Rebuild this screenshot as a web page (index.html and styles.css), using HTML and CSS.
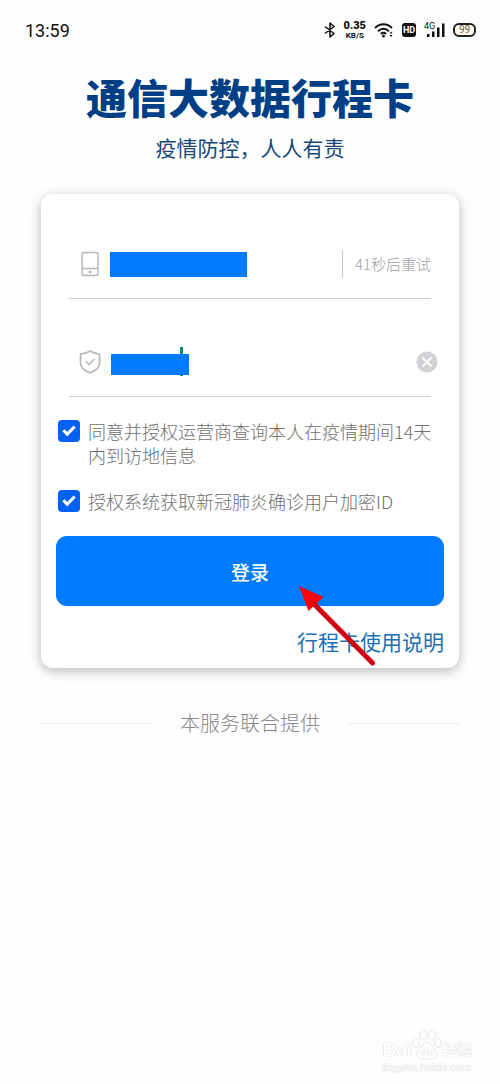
FILE: index.html
```html
<!DOCTYPE html>
<html lang="zh-CN">
<head>
<meta charset="utf-8">
<meta name="viewport" content="width=device-width, initial-scale=1">
<title>通信大数据行程卡</title>
<link rel="stylesheet" href="styles.css">
</head>
<body>
<div class="page">
  <div class="status">
    <time class="clock">13:59</time>
    <div class="indicators">
      <svg class="ico" width="12" height="16" viewBox="0 0 12 16" fill="none" stroke="#111" stroke-width="1.5" stroke-linejoin="round"><path d="M1 4.500 10 11.500 6 15V1l4 3.500L1 11.500"/></svg>
      <div class="speed"><b class="rate">0.35</b><span class="unit">KB/S</span></div>
      <svg class="ico" width="20" height="16" viewBox="0 0 20 16" fill="none" stroke="#111" stroke-width="1.900"><path d="M1 6C6 1 13 1 18 6M4 9.200C7.500 6 11.500 6 15 9.200M6.800 12C8.500 10.500 10.500 10.500 12.200 12"/><circle cx="9.500" cy="14" r="1.500" fill="#111" stroke="none"/><path d="m15.500 11.500 1.500-2 1.500 2zM15.500 13l1.500 2 1.500-2z" fill="#111" stroke="none"/></svg>
      <span class="hd">HD</span>
      <svg class="ico" width="21" height="16" viewBox="0 0 21 16" fill="#111"><text class="net" x="0" y="7">4G</text><path d="M3 12h2.500v3H3zM8 9.500h2.500V15H8zM13 5.500h2.500V15H13zM18 1.500h2.500V15H18z"/></svg>
      <span class="battery">99</span>
    </div>
  </div>

  <header class="heading">
    <h1 class="title">通信大数据行程卡</h1>
    <p class="subtitle">疫情防控，人人有责</p>
  </header>

  <main>
    <form class="card">
      <div class="fields">
        <div class="field">
          <svg class="lead" width="24" height="26" viewBox="0 0 24 26" fill="none" stroke="#b7b8bd" stroke-width="1.500"><rect x="4" y="1.500" width="16" height="23" rx="2"/><path d="M4 17.500h16"/><circle cx="12" cy="21" r=".8"/></svg>
          <div class="entry">
            <input class="box" type="tel" aria-label="手机号">
            <span class="mask mask-phone"></span>
          </div>
          <button class="retry" type="button">41秒后重试</button>
        </div>
        <div class="field">
          <svg class="lead" width="24" height="26" viewBox="0 0 24 26" fill="none" stroke="#b7b8bd" stroke-width="1.700" stroke-linejoin="round"><path d="M12 2C9 4 6 5 2.500 5v9c0 4.500 4.500 8 9.500 9.800C17 22 21.500 18.500 21.500 14V5C18 5 15 4 12 2z"/><path d="m8 12.500 3 3 5.500-5.500"/></svg>
          <div class="entry">
            <input class="box" type="text" aria-label="验证码">
            <span class="caret"></span>
            <span class="mask mask-code"></span>
          </div>
          <button class="clear" type="button" aria-label="清除"><svg width="22" height="22" viewBox="0 0 22 22"><circle cx="11" cy="11" r="10.500" fill="#d1d1d6"/><path d="m6.500 6.500 9 9m0-9-9 9" stroke="#fff" stroke-width="1.900"/></svg></button>
        </div>
      </div>

      <div class="consents">
        <label class="consent"><input class="tick" type="checkbox" checked><span>同意并授权运营商查询本人在疫情期间14天内到访地信息</span></label>
        <label class="consent"><input class="tick" type="checkbox" checked><span>授权系统获取新冠肺炎确诊用户加密ID</span></label>
      </div>

      <button class="login" type="submit">登录</button>
      <a class="help" href="#help">行程卡使用说明</a>
      <svg class="arrow" width="78" height="80" viewBox="0 0 78 80"><path d="m16 19 57.500 58" stroke="#cf0714" stroke-width="5" stroke-linecap="round"/><path d="m0 0 24.500 11L9.500 25z" fill="#f80409"/></svg>
    </form>
    <p class="provider">本服务联合提供</p>
  </main>

  <footer class="watermark">
    <div class="brand">
      <span>Bai</span>
      <svg width="30" height="32" viewBox="0 0 30 32" fill="#fff" stroke="#e6e6e6"><ellipse cx="11" cy="6" rx="3.500" ry="5"/><ellipse cx="20" cy="6" rx="3.500" ry="5"/><ellipse cx="4" cy="14" rx="3" ry="4.500"/><ellipse cx="26" cy="14" rx="3" ry="4.500"/><path d="M15 13c-4 0-5 5-8 8-4 4-1 9 3 9h10c5 0 7-5 3-9-3-3-4-8-8-8z"/><text class="paw" x="9" y="27">du</text></svg>
      <span class="exp">经验</span>
    </div>
    <span class="site">jingyan.baidu.com</span>
  </footer>
</div>
</body>
</html>
```
FILE: styles.css
```css
* { box-sizing: border-box; }

body {
  margin: 0;
  background: #fefefe;
  font-family: "Noto Sans CJK SC", sans-serif;
}

button, input { font: inherit; }

.page {
  min-height: 100vh;
  display: flex;
  flex-direction: column;
}

.status {
  display: flex;
  justify-content: space-between;
  align-items: center;
  height: 60px;
  padding: 0 24px 0 25px;
  color: #111;
  font-family: Roboto, sans-serif;
}

.clock { font-size: 18px; }

.indicators {
  display: flex;
  align-items: center;
  gap: 8px;
}

.ico { display: block; }

.speed {
  display: flex;
  flex-direction: column;
  align-items: center;
  font-weight: 700;
}

.rate { font-size: 11px; line-height: 11px; }
.unit { font-size: 8px; line-height: 9px; }

.hd {
  width: 14px;
  border-radius: 3px;
  background: #111;
  color: #fff;
  font-size: 9px;
  font-weight: 700;
  line-height: 14px;
  text-align: center;
}

.net { font-size: 9px; }

.battery {
  width: 23px;
  border: 2px solid #222;
  border-radius: 6px;
  background: #fffbee;
  color: #665d44;
  font-size: 10px;
  line-height: 10px;
  text-align: center;
}

.heading {
  padding-top: 10px;
  text-align: center;
}

.title {
  margin: 0;
  color: #003f86;
  font-size: 41px;
  font-weight: 900;
  line-height: 52px;
}

.subtitle {
  margin: 9px 0 0;
  color: #174878;
  font-size: 21px;
  line-height: 32px;
}

.card {
  position: relative;
  display: flex;
  flex-direction: column;
  margin: 31px 41px 0;
  padding: 35px 15px 11px;
  border-radius: 12px;
  background: #fff;
  box-shadow: 0 3px 12px rgba(0, 0, 0, 0.28);
}

.fields {
  display: grid;
  gap: 28px;
  padding: 0 13px;
}

.field {
  display: flex;
  align-items: center;
  height: 70px;
  padding-left: 9px;
  border-bottom: 1px solid #cfd1d1;
}

.lead { flex: none; margin-right: 8px; }

.entry {
  position: relative;
  flex: 1;
  min-width: 0;
}

.box {
  display: block;
  width: 100%;
  height: 30px;
  padding: 0;
  border: 0;
  outline: 0;
  background: transparent;
  font-size: 18px;
}

.mask {
  position: absolute;
  left: 0;
  background: #007aff;
}

.mask-phone { top: 3px; width: 137px; height: 25px; }
.mask-code { top: 7px; left: 1px; width: 78px; height: 21px; }

.caret {
  position: absolute;
  top: 0;
  left: 70px;
  width: 3px;
  height: 29px;
  background: #0b8a70;
}

.retry {
  height: 28px;
  padding: 0 0 0 12px;
  border: 0;
  border-left: 1px solid #c8c8c8;
  background: none;
  color: #a0a0a0;
  font-size: 15px;
  font-weight: 300;
  line-height: 28px;
}

.clear {
  margin-right: -7px;
  padding: 0;
  border: 0;
  background: none;
}

.clear svg { display: block; }

.consents {
  display: grid;
  gap: 22px;
  margin-top: 22px;
  padding-left: 2px;
}

.consent {
  display: flex;
  align-items: flex-start;
  gap: 8px;
  color: #707070;
  font-size: 18px;
  font-weight: 300;
  line-height: 24px;
}

.tick {
  flex: none;
  appearance: none;
  display: grid;
  place-items: center;
  width: 22px;
  height: 22px;
  margin: 1px 0;
  border-radius: 4px;
  background: #0062f5;
}

.tick:checked::before {
  content: "";
  box-sizing: border-box;
  width: 12px;
  height: 7px;
  margin-bottom: 4px;
  border: solid #fff;
  border-width: 0 0 3px 3px;
  transform: rotate(-45deg);
}

.login {
  height: 70px;
  margin-top: 23px;
  border: 0;
  border-radius: 11px;
  background: #007aff;
  color: #fff;
  font-size: 19px;
  font-weight: 500;
}

.help {
  align-self: flex-end;
  margin-top: 19px;
  color: #1b70b4;
  font-size: 21px;
  line-height: 32px;
  text-decoration: none;
}

.arrow {
  position: absolute;
  right: 82px;
  bottom: 2px;
}

.provider {
  display: flex;
  align-items: center;
  gap: 28px;
  margin: 40px 41px 0;
  color: #888;
  font-size: 20px;
  font-weight: 300;
  line-height: 30px;
}

.provider::before,
.provider::after {
  content: "";
  flex: 1;
  border-top: 1px solid #ececec;
}

.watermark {
  align-self: flex-end;
  margin: auto 28px 11px 0;
  color: #fff;
  font-family: "Liberation Sans", "Noto Sans CJK SC", sans-serif;
  text-shadow: 0 0 1px #d4d4d4, 0 0 1px #d4d4d4;
}

.brand {
  display: flex;
  align-items: flex-end;
  font-size: 19px;
  font-weight: 700;
  line-height: 22px;
}

.exp { font-size: 15px; }

.paw {
  fill: #fff;
  stroke: none;
  font-size: 11px;
}

.site {
  display: block;
  font-size: 11px;
  line-height: 12px;
}
```
